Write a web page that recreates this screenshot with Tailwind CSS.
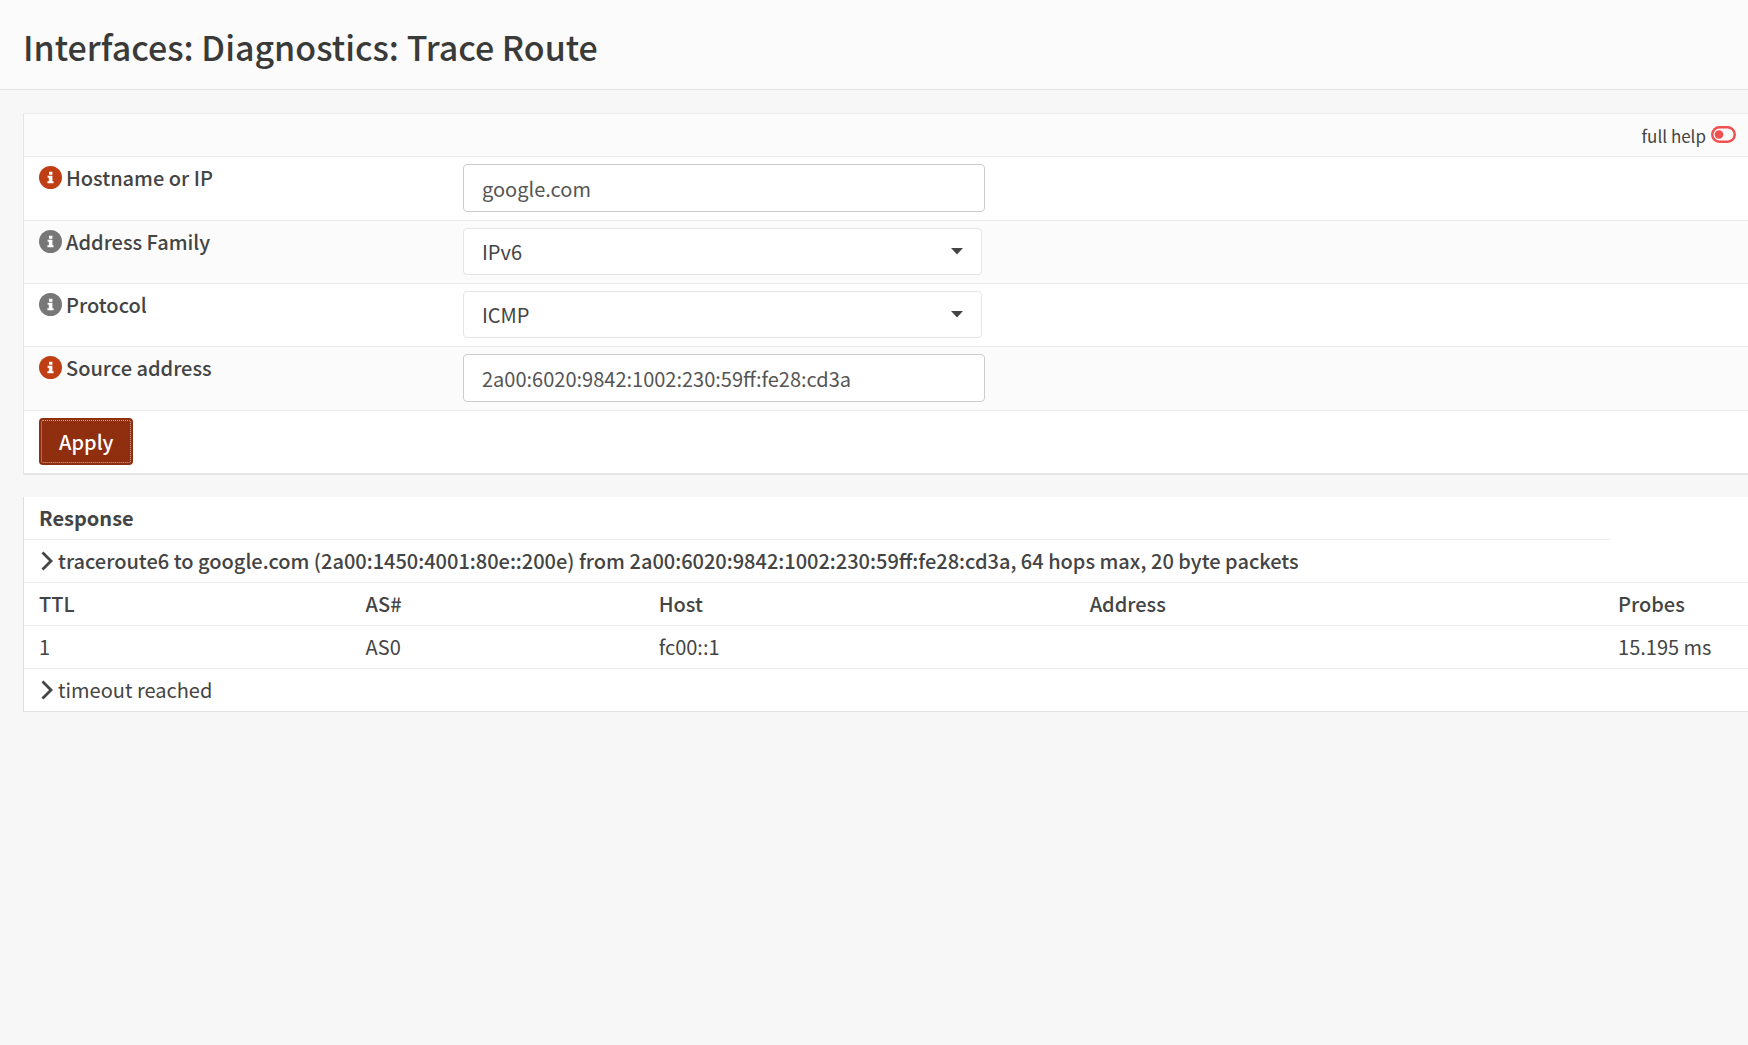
<!DOCTYPE html>
<html lang="en">
  <head>
    <meta charset="UTF-8" />
    <meta name="viewport" content="width=device-width, initial-scale=1.0" />
    <title>Trace Route | Diagnostics | Interfaces</title>
    <script src="https://cdn.jsdelivr.net/npm/@tailwindcss/browser@4"></script>
  </head>
  <body class="min-h-screen bg-[#f7f7f7] font-['Noto_Sans_CJK_SC','Open_Sans',sans-serif] text-[20px] leading-7 text-[#444]">
    <!-- Icons -->
    <svg class="hidden">
      <symbol id="icon-info" viewBox="0 0 24 24">
        <circle cx="12" cy="12" r="12" fill="currentColor" />
        <path fill="#fff" d="M10.500 6H14v3h-3.500zM9 10.300h5v5.700h1.200v2H8.800v-2H10.300v-3.700H9z" />
      </symbol>
      <symbol id="icon-chevron" viewBox="0 0 12 20">
        <path d="M1.500 1.500 10 10l-8.500 8.500" fill="none" stroke="currentColor" stroke-width="2.800" />
      </symbol>
      <symbol id="icon-toggle" viewBox="0 0 25 17">
        <rect x="1.250" y="1.250" width="22.500" height="14.500" rx="7.250" fill="none" stroke="currentColor" stroke-width="2.500" />
        <circle cx="8" cy="8.500" r="4.300" fill="currentColor" />
      </symbol>
    </svg>

    <header class="border-b border-[#e5e5e5] bg-[#fbfbfb] px-[23px] pt-[25px] pb-5">
      <h1 class="text-[34px] leading-[44px] font-medium text-[#3a3a38]">Interfaces: Diagnostics: Trace Route</h1>
    </header>

    <main class="flex flex-col gap-[22px] pt-[23px] pl-[23px]">
      <!-- Settings -->
      <form class="border-b-2 border-l border-[#e5e5e5] bg-white" onsubmit="return false">
        <div class="flex h-[43px] items-center justify-end border-t border-[#ebebeb] bg-[#fbfbfb] pt-[2px] pr-3">
          <a href="#" class="flex items-center gap-[5px] text-[17px]">
            full help
            <svg class="mb-1 h-[17px] w-[25px] text-[#f05050]"><use href="#icon-toggle" /></svg>
          </a>
        </div>

        <div class="flex border-t border-[#ebebeb] pt-[7px] pb-2">
          <div class="flex w-1/4 items-start gap-1 pl-[15px]">
            <a href="#" aria-label="Help" class="mt-[2px] text-[#c03e14]"><svg class="size-[23px]"><use href="#icon-info" /></svg></a>
            <label for="hostname" class="font-medium">Hostname or IP</label>
          </div>
          <div class="flex-1 px-2">
            <input id="hostname" type="text" value="google.com" class="block h-12 w-full max-w-[522px] rounded border border-[#ccc] bg-white px-[18px] text-[#555]" />
          </div>
        </div>

        <div class="flex border-t border-[#ebebeb] bg-[#fbfbfb] pt-[7px] pb-2">
          <div class="flex w-1/4 items-start gap-1 pl-[15px]">
            <a href="#" aria-label="Help" class="mt-[2px] text-[#777]"><svg class="size-[23px]"><use href="#icon-info" /></svg></a>
            <label for="family" class="font-medium">Address Family</label>
          </div>
          <div class="flex-1 px-2">
            <div class="relative max-w-[519px]">
              <select id="family" class="block h-[47px] w-full appearance-none rounded border border-[#e5e5e5] bg-white px-[18px]">
                <option>IPv4</option>
                <option selected>IPv6</option>
              </select>
              <svg class="pointer-events-none absolute top-5 right-[19px] h-[7px] w-3" viewBox="0 0 12 7"><path d="M0 0h12L6 6.500z" fill="#444" /></svg>
            </div>
          </div>
        </div>

        <div class="flex border-t border-[#ebebeb] pt-[7px] pb-2">
          <div class="flex w-1/4 items-start gap-1 pl-[15px]">
            <a href="#" aria-label="Help" class="mt-[2px] text-[#777]"><svg class="size-[23px]"><use href="#icon-info" /></svg></a>
            <label for="protocol" class="font-medium">Protocol</label>
          </div>
          <div class="flex-1 px-2">
            <div class="relative max-w-[519px]">
              <select id="protocol" class="block h-[47px] w-full appearance-none rounded border border-[#e5e5e5] bg-white px-[18px]">
                <option selected>ICMP</option>
                <option>UDP</option>
                <option>TCP</option>
              </select>
              <svg class="pointer-events-none absolute top-5 right-[19px] h-[7px] w-3" viewBox="0 0 12 7"><path d="M0 0h12L6 6.500z" fill="#444" /></svg>
            </div>
          </div>
        </div>

        <div class="flex border-t border-[#ebebeb] bg-[#fbfbfb] pt-[7px] pb-2">
          <div class="flex w-1/4 items-start gap-1 pl-[15px]">
            <a href="#" aria-label="Help" class="mt-[2px] text-[#c03e14]"><svg class="size-[23px]"><use href="#icon-info" /></svg></a>
            <label for="source" class="font-medium">Source address</label>
          </div>
          <div class="flex-1 px-2">
            <input id="source" type="text" value="2a00:6020:9842:1002:230:59ff:fe28:cd3a" class="block h-12 w-full max-w-[522px] rounded border border-[#ccc] bg-white px-[18px] text-[#555]" />
          </div>
        </div>

        <div class="border-t border-[#ebebeb] pt-[7px] pb-2 pl-[15px]">
          <button type="submit" class="block h-[47px] rounded bg-[#902e10] px-5 font-medium text-white outline-1 -outline-offset-3 outline-white/60 outline-dotted">Apply</button>
        </div>
      </form>

      <!-- Response -->
      <section class="border-b border-l border-[#e0e0e0] bg-white">
        <table class="w-full table-fixed border-collapse text-left">
          <colgroup>
            <col class="w-[19.35%]" />
            <col class="w-[17%]" />
            <col class="w-[25%]" />
            <col class="w-[30.65%]" />
            <col class="w-[8%]" />
          </colgroup>
          <thead>
            <tr class="h-[42px]">
              <th colspan="4" class="border-b border-[#ebebeb] pl-[15px] font-bold">Response</th>
            </tr>
            <tr class="h-[43px] border-b border-[#ebebeb]">
              <th colspan="5" class="pl-[15px] font-medium">
                <div class="flex items-center gap-[5px] pl-[2px]">
                  <svg class="h-5 w-3"><use href="#icon-chevron" /></svg>
                  traceroute6 to google.com (2a00:1450:4001:80e::200e) from 2a00:6020:9842:1002:230:59ff:fe28:cd3a, 64 hops max, 20 byte packets
                </div>
              </th>
            </tr>
            <tr class="h-[43px] border-b border-[#ebebeb]">
              <th class="pl-[15px] font-medium">TTL</th>
              <th class="pl-2 font-medium">AS#</th>
              <th class="pl-2 font-medium">Host</th>
              <th class="pl-2 font-medium">Address</th>
              <th class="pl-2 font-medium">Probes</th>
            </tr>
          </thead>
          <tbody>
            <tr class="h-[43px] border-b border-[#ebebeb]">
              <td class="pl-[15px]">1</td>
              <td class="pl-2">AS0</td>
              <td class="pl-2">fc00::1</td>
              <td class="pl-2"></td>
              <td class="pl-2">15.195 ms</td>
            </tr>
            <tr class="h-[43px]">
              <td colspan="5" class="pl-[15px]">
                <div class="flex items-center gap-[5px] pl-[2px]">
                  <svg class="h-5 w-3"><use href="#icon-chevron" /></svg>
                  timeout reached
                </div>
              </td>
            </tr>
          </tbody>
        </table>
      </section>
    </main>
  </body>
</html>
